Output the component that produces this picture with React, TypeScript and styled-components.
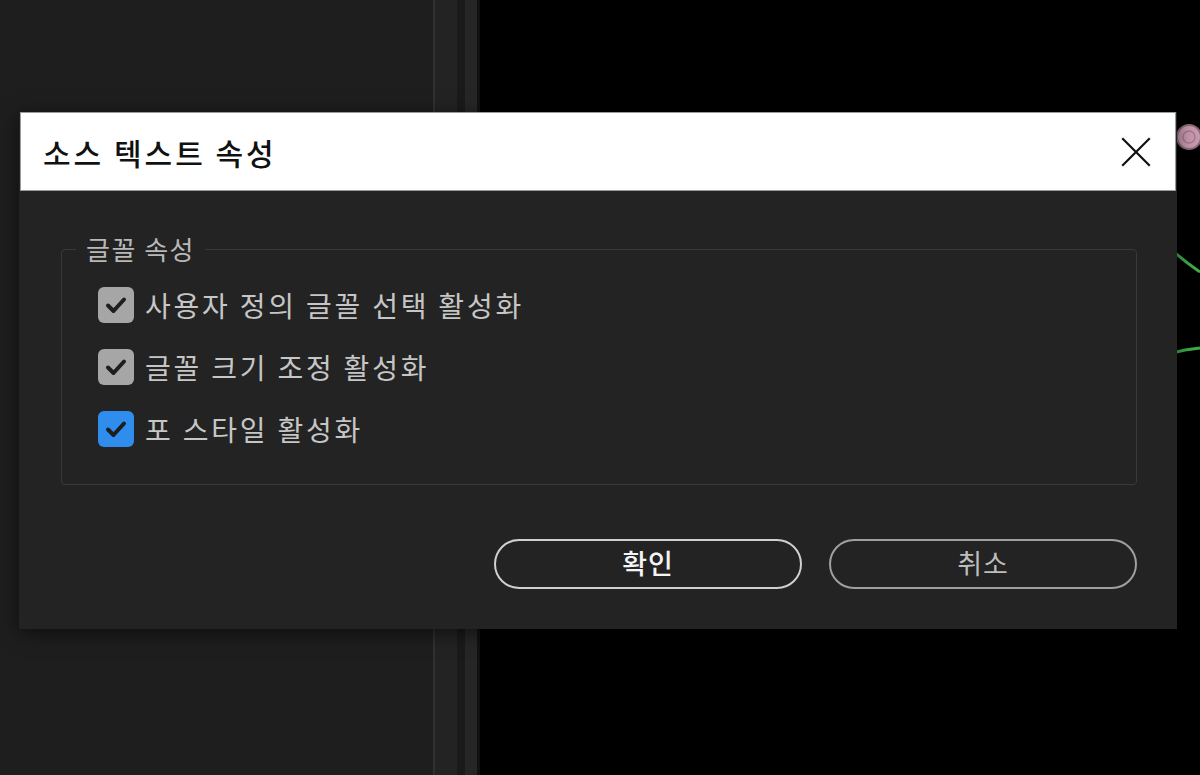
import React from 'react';
import styled, { createGlobalStyle } from 'styled-components';

const GlobalStyle = createGlobalStyle`
  html, body {
    margin: 0;
    padding: 0;
    background: #000;
    overflow: hidden;
  }
  * { box-sizing: border-box; }
`;

const Stage = styled.div`
  position: relative;
  width: 1200px;
  height: 775px;
  display: flex;
  font-family: "Noto Sans CJK KR", "Noto Sans", sans-serif;
`;

const SidePanel = styled.div`
  width: 433px;
  background: #1e1e1e;
`;

const Strip = styled.div<{ $w: number; $bg: string }>`
  width: ${p => p.$w}px;
  background: ${p => p.$bg};
`;

const Canvas = styled.div`
  flex: 1;
  background: #000;
  position: relative;
`;

const Overlay = styled.svg`
  position: absolute;
  inset: 0;
`;

const Dialog = styled.div`
  position: absolute;
  left: 19px;
  top: 112px;
  width: 1158px;
  background: #232323;
  box-shadow: 0 4px 18px rgba(0, 0, 0, 0.55);
  display: flex;
  flex-direction: column;
`;

const TitleBar = styled.div`
  height: 79px;
  margin: 0 1px;
  background: #fff;
  border: 1px solid #9a9a9a;
  display: flex;
  align-items: center;
  justify-content: space-between;
  padding: 0 22px 0 22px;
`;

const Title = styled.h1`
  margin: 0;
  font-size: 30px;
  font-weight: 500;
  color: #111;
  letter-spacing: 3px;
`;

const CloseButton = styled.button`
  width: 34px;
  height: 34px;
  padding: 0;
  border: none;
  background: transparent;
  display: flex;
  align-items: center;
  justify-content: center;
`;

const Body = styled.div`
  padding: 45px 40px 40px 42px;
  display: flex;
  flex-direction: column;
`;

const Group = styled.fieldset`
  margin: 0;
  height: 249px;
  border: 1px solid #393939;
  border-radius: 4px;
  padding: 25px 36px 0 36px;
  display: flex;
  flex-direction: column;
  gap: 26px;
`;

const Legend = styled.legend`
  margin-left: -22px;
  padding: 0 10px;
  font-size: 26px;
  line-height: 26px;
  color: #b8b8b8;
  letter-spacing: 1.5px;
`;

const Row = styled.label`
  display: flex;
  align-items: center;
  gap: 11px;
  height: 36px;
`;

const Box = styled.span<{ $accent?: boolean }>`
  width: 36px;
  height: 36px;
  border-radius: 6px;
  background: ${p => (p.$accent ? '#2e8ded' : '#a6a6a6')};
  display: flex;
  align-items: center;
  justify-content: center;
  flex-shrink: 0;
`;

const Label = styled.span`
  font-size: 28px;
  color: #c6c6c6;
  letter-spacing: 2.8px;
  line-height: 36px;
`;

const Actions = styled.div`
  display: flex;
  justify-content: flex-end;
  gap: 27px;
  margin-top: 54px;
`;

const Pill = styled.button<{ $primary?: boolean }>`
  width: 308px;
  height: 50px;
  border-radius: 25px;
  background: transparent;
  border: 2px solid ${p => (p.$primary ? '#d0d0d0' : '#a0a0a0')};
  color: ${p => (p.$primary ? '#f4f4f4' : '#bdbdbd')};
  font-family: inherit;
  font-size: 27px;
  font-weight: ${p => (p.$primary ? 500 : 400)};
  letter-spacing: 1px;
  display: flex;
  align-items: center;
  justify-content: center;
  padding: 0 0 3px;
`;

function Check() {
  return (
    <svg width="24" height="24" viewBox="0 0 24 24">
      <path d="M4 12.5 L9.5 18 L20 6.5" fill="none" stroke="#1e1e1e" strokeWidth="4" strokeLinecap="round" strokeLinejoin="round" />
    </svg>
  );
}

const options = [
  { label: '사용자 정의 글꼴 선택 활성화', accent: false },
  { label: '글꼴 크기 조정 활성화', accent: false },
  { label: '포 스타일 활성화', accent: true },
];

export default function App() {
  return (
    <>
      <GlobalStyle />
      <Stage>
        <SidePanel />
        <Strip $w={2} $bg="#303030" />
        <Strip $w={22} $bg="#232323" />
        <Strip $w={8} $bg="#1a1a1a" />
        <Strip $w={12} $bg="#262626" />
        <Strip $w={3} $bg="#111" />
        <Canvas>
          <Overlay width="720" height="775">
            <circle cx="709" cy="137" r="12" fill="#c89aae" stroke="#8a6a78" strokeWidth="2" />
            <circle cx="709" cy="137" r="6" fill="none" stroke="#a87a90" strokeWidth="1.5" />
            <path d="M692 250 Q705 262 720 272" fill="none" stroke="#3fae4a" strokeWidth="3" />
            <path d="M692 353 L705 350 L720 348" fill="none" stroke="#3fae4a" strokeWidth="3" />
          </Overlay>
        </Canvas>

        <Dialog>
          <TitleBar>
            <Title>소스 텍스트 속성</Title>
            <CloseButton aria-label="닫기">
              <svg width="30" height="30" viewBox="0 0 30 30">
                <path d="M2 2 L28 28 M28 2 L2 28" stroke="#111" strokeWidth="2.2" strokeLinecap="square" />
              </svg>
            </CloseButton>
          </TitleBar>
          <Body>
            <Group>
              <Legend>글꼴 속성</Legend>
              {options.map(o => (
                <Row key={o.label}>
                  <Box $accent={o.accent}>
                    <Check />
                  </Box>
                  <Label>{o.label}</Label>
                </Row>
              ))}
            </Group>
            <Actions>
              <Pill $primary>확인</Pill>
              <Pill>취소</Pill>
            </Actions>
          </Body>
        </Dialog>
      </Stage>
    </>
  );
}
